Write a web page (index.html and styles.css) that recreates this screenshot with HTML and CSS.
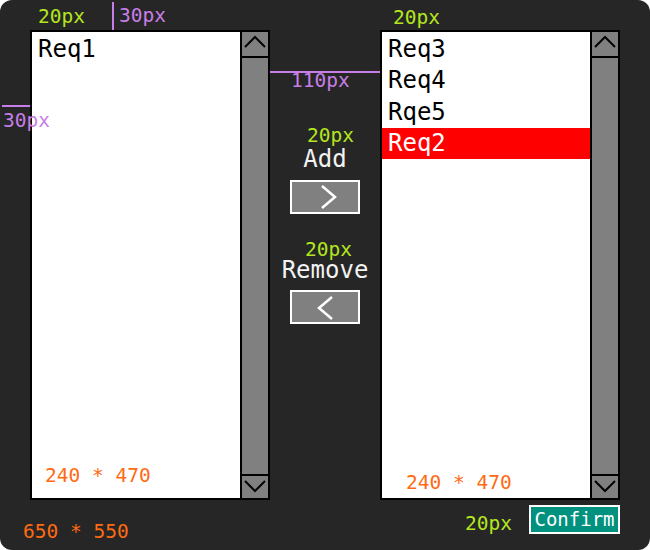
FILE: index.html
```html
<!DOCTYPE html>
<html>
<head>
<meta charset="utf-8">
<link rel="stylesheet" href="styles.css">
</head>
<body>
<div class="frame">
  <div class="main">
    <div class="list">
      <ul class="items">
        <li>Req1</li>
      </ul>
      <div class="scrollbar">
        <div class="sb-btn up"><svg width="26" height="24" viewBox="0 0 26 24"><polyline points="3,15 13,5 23,15" fill="none" stroke="#000" stroke-width="2"/></svg></div>
        <div class="track"></div>
        <div class="sb-btn down"><svg width="26" height="22" viewBox="0 0 26 22"><polyline points="3,5 13,15 23,5" fill="none" stroke="#000" stroke-width="2"/></svg></div>
      </div>
    </div>
    <div class="middle">
      <div class="action-label">Add</div>
      <button class="move-btn"><svg width="66" height="30" viewBox="0 0 66 30"><polyline points="30,4 43,15 30,26" fill="none" stroke="#fff" stroke-width="2.5"/></svg></button>
      <div class="action-label remove">Remove</div>
      <button class="move-btn remove-btn"><svg width="66" height="30" viewBox="0 0 66 30"><polyline points="40,5 27,16 40,27" fill="none" stroke="#fff" stroke-width="2.5"/></svg></button>
    </div>
    <div class="list">
      <ul class="items">
        <li>Req3</li>
        <li>Req4</li>
        <li>Rqe5</li>
        <li class="selected">Req2</li>
      </ul>
      <div class="scrollbar">
        <div class="sb-btn up"><svg width="26" height="24" viewBox="0 0 26 24"><polyline points="3,15 13,5 23,15" fill="none" stroke="#000" stroke-width="2"/></svg></div>
        <div class="track"></div>
        <div class="sb-btn down"><svg width="26" height="22" viewBox="0 0 26 22"><polyline points="3,5 13,15 23,5" fill="none" stroke="#000" stroke-width="2"/></svg></div>
      </div>
    </div>
  </div>
  <div class="footer">
    <button class="confirm">Confirm</button>
  </div>

  <div class="note lime n-top-left">20px</div>
  <div class="vline l-top"></div>
  <div class="note purple n-top">30px</div>
  <div class="hline l-left"></div>
  <div class="note purple n-left">30px</div>
  <div class="hline l-mid"></div>
  <div class="note purple n-mid">110px</div>
  <div class="note lime n-add">20px</div>
  <div class="note lime n-remove">20px</div>
  <div class="note lime n-right-top">20px</div>
  <div class="note orange n-size-left">240 * 470</div>
  <div class="note orange n-size-right">240 * 470</div>
  <div class="note orange n-frame">650 * 550</div>
  <div class="note lime n-bottom">20px</div>
</div>
</body>
</html>
```

FILE: styles.css
```css
* { box-sizing: border-box; }

body {
  margin: 0;
  background: #ffffff;
  font-family: "DejaVu Sans Mono", monospace;
}

.frame {
  position: relative;
  width: 650px;
  height: 550px;
  padding: 30px 30px 0 30px;
  background: #262626;
  border-radius: 12px;
}

.main {
  display: flex;
  height: 470px;
}

.list {
  display: flex;
  width: 240px;
  height: 470px;
  border: 2px solid #000;
  background: #fff;
}

.items {
  flex: 1;
  list-style: none;
  margin: 0;
  padding: 2px 0 0 0;
  font-size: 24px;
  line-height: 31.3px;
  color: #000;
}

.items li {
  padding-left: 6px;
}

.items li.selected {
  background: #ff0000;
  color: #fff;
}

.scrollbar {
  width: 28px;
  display: flex;
  flex-direction: column;
  border-left: 2px solid #000;
  background: #808080;
}

.sb-btn svg { display: block; }

.sb-btn.up {
  height: 26px;
  border-bottom: 2px solid #000;
}

.track { flex: 1; }

.sb-btn.down {
  height: 24px;
  border-top: 2px solid #000;
}

.middle {
  width: 110px;
  display: flex;
  flex-direction: column;
  align-items: center;
  padding-top: 117px;
}

.action-label {
  font-size: 24px;
  line-height: 24px;
  color: #f2f2f2;
}

.action-label.remove {
  margin-top: 44px;
}

.move-btn {
  margin-top: 9px;
  width: 70px;
  height: 34px;
  padding: 0;
  border: 2px solid #fff;
  background: #808080;
  display: block;
}

.move-btn.remove-btn {
  margin-top: 8px;
}

.move-btn svg { display: block; }

.footer {
  display: flex;
  justify-content: flex-end;
  margin-top: 5px;
}

.confirm {
  width: 91px;
  height: 29px;
  padding: 0;
  border: 2px solid #fff;
  background: #00927f;
  color: #fff;
  font-family: "DejaVu Sans Mono", monospace;
  font-size: 19px;
  line-height: 25px;
  text-align: center;
}

/* measurement annotations overlaid on the design */
.note {
  position: absolute;
  font-size: 19.5px;
  line-height: 16px;
  white-space: nowrap;
}

.lime { color: #b4e61e; }
.purple { color: #c77ee6; }
.orange { color: #ff6a13; }

.n-top-left { left: 38px; top: 9px; }
.n-top { left: 119px; top: 8px; }
.n-left { left: 3px; top: 113px; }
.n-mid { left: 291px; top: 73px; }
.n-add { left: 307px; top: 128px; }
.n-remove { left: 305px; top: 242px; }
.n-right-top { left: 393px; top: 10px; }
.n-size-left { left: 45px; top: 468px; }
.n-size-right { left: 406px; top: 475px; }
.n-frame { left: 23px; top: 524px; }
.n-bottom { left: 465px; top: 516px; }

.vline, .hline {
  position: absolute;
  background: #c77ee6;
}

.l-top { left: 112px; top: 2px; width: 2px; height: 28px; }
.l-left { left: 2px; top: 105px; width: 28px; height: 2px; }
.l-mid { left: 270px; top: 71px; width: 110px; height: 2px; }
```
